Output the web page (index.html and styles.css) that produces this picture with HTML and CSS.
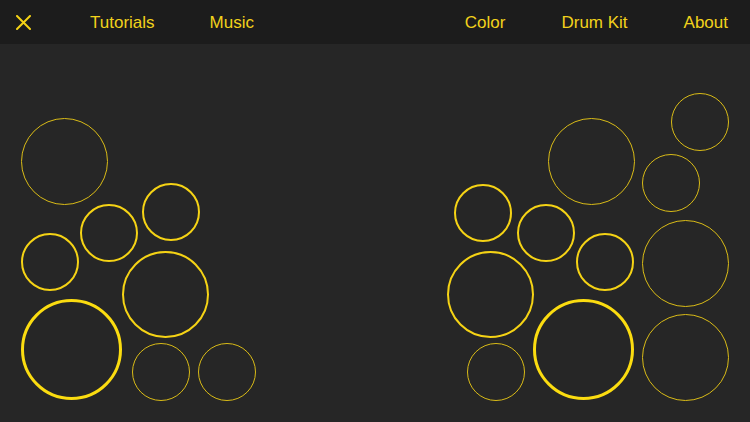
FILE: index.html
```html
<!DOCTYPE html>
<html lang="en">
<head>
    <meta charset="UTF-8">
    <meta name="viewport" content="width=device-width, initial-scale=1.0">
    <title>Drum Pads</title>
    <link rel="stylesheet" href="styles.css">
</head>
<body>
    <header class="top_bar">
        <button class="but_close" type="button" aria-label="Close">
            <svg width="15" height="15" viewBox="0 0 15 15">
                <path d="M1 1 L14 14 M14 1 L1 14" stroke="#f5d315" stroke-width="2" stroke-linecap="round" fill="none"/>
            </svg>
        </button>
        <nav class="nav_left">
            <a class="nav_item" href="#">Tutorials</a>
            <a class="nav_item" href="#">Music</a>
        </nav>
        <nav class="nav_right">
            <a class="nav_item" href="#">Color</a>
            <a class="nav_item" href="#">Drum Kit</a>
            <a class="nav_item" href="#">About</a>
        </nav>
    </header>
    <main class="board">
        <!-- left kit -->
        <div class="pad big thin" style="left:21px;top:74px"></div>
        <div class="pad small mid" style="left:80px;top:160px"></div>
        <div class="pad small mid" style="left:142px;top:139px"></div>
        <div class="pad small mid" style="left:21px;top:189px"></div>
        <div class="pad big mid" style="left:122px;top:207px"></div>
        <div class="pad huge thick" style="left:21px;top:255px"></div>
        <div class="pad small thin" style="left:132px;top:299px"></div>
        <div class="pad small thin" style="left:198px;top:299px"></div>
        <!-- right kit -->
        <div class="pad small thin" style="left:671px;top:49px"></div>
        <div class="pad big thin" style="left:548px;top:74px"></div>
        <div class="pad small thin" style="left:642px;top:110px"></div>
        <div class="pad small mid" style="left:454px;top:140px"></div>
        <div class="pad small mid" style="left:517px;top:160px"></div>
        <div class="pad small mid" style="left:576px;top:189px"></div>
        <div class="pad big thin" style="left:642px;top:176px"></div>
        <div class="pad big mid" style="left:447px;top:207px"></div>
        <div class="pad small thin" style="left:467px;top:299px"></div>
        <div class="pad huge thick" style="left:533px;top:255px"></div>
        <div class="pad big thin" style="left:642px;top:270px"></div>
    </main>
</body>
</html>
```

FILE: styles.css
```css
*{
    box-sizing: border-box;
    font-family: "Liberation Sans", Arial, Helvetica, sans-serif;
}
body{
    margin: 0;
    background-color: #262626;
    width: 750px;
    height: 422px;
    overflow: hidden;
}
.top_bar{
    height: 44px;
    background-color: #1c1c1c;
    display: flex;
    align-items: center;
    padding: 0 22px 0 16px;
}
.but_close{
    width: 15px;
    height: 15px;
    padding: 0;
    border: none;
    background: none;
    display: flex;
    margin-top: 1px;
}
.nav_left{
    display: flex;
    gap: 55px;
    margin-left: 59px;
}
.nav_right{
    display: flex;
    gap: 56px;
    margin-left: auto;
}
.nav_item{
    color: #f2d21b;
    text-decoration: none;
    font-size: 17px;
    line-height: 20px;
    padding-top: 1px;
}
.board{
    position: relative;
    height: 378px;
}
.pad{
    position: absolute;
    border-radius: 50%;
    border-style: solid;
    border-color: #f5d315;
}
.small{
    width: 58px;
    height: 58px;
}
.big{
    width: 87px;
    height: 87px;
}
.huge{
    width: 101px;
    height: 101px;
}
.thin{
    border-width: 1px;
    border-color: #d9bb17;
}
.mid{
    border-width: 2px;
}
.big.mid{
    border-width: 2.5px;
}
.thick{
    border-width: 3.5px;
    border-color: #fbdc10;
}
```
